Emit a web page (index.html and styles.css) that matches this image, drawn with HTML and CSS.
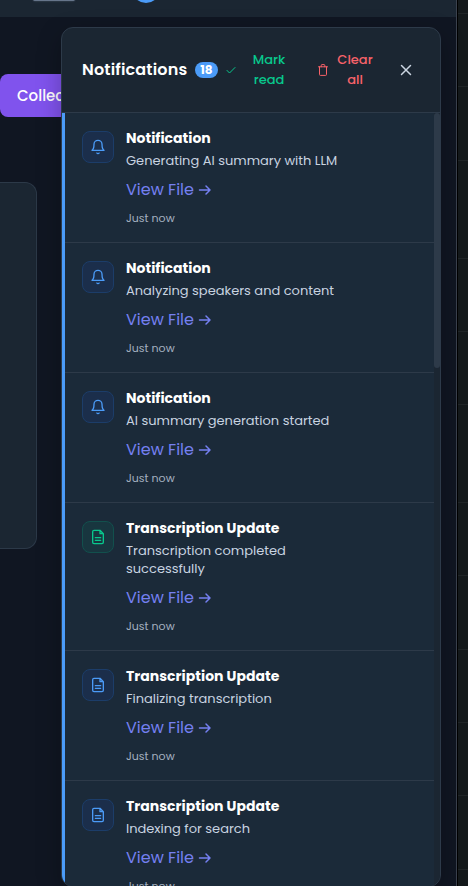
FILE: index.html
```html
<!DOCTYPE html>
<html lang="en">
<head>
<meta charset="utf-8">
<title>Notifications</title>
<link rel="stylesheet" href="styles.css">
</head>
<body>
<svg class="defs" width="0" height="0">
  <symbol id="bell" viewBox="0 0 24 24"><path d="M6 8a6 6 0 0 1 12 0c0 7 3 9 3 9H3s3-2 3-9M10.3 21a1.94 1.94 0 0 0 3.4 0"/></symbol>
  <symbol id="file" viewBox="0 0 24 24"><path d="M15 2H6a2 2 0 0 0-2 2v16a2 2 0 0 0 2 2h12a2 2 0 0 0 2-2V7ZM15 2v5h5M8 13h8M8 17h8"/></symbol>
  <symbol id="arrow" viewBox="0 0 14 12"><path d="M1.5 6H12M8 2l4 4-4 4"/></symbol>
</svg>
<div class="backdrop"><i></i><i></i><i></i><i class="wide"></i><i></i><i></i><i class="wide"></i><i></i><i></i><i></i><i></i><i></i></div>
<div class="app">
  <header class="topbar"><span class="tab"></span><span class="avatar"></span></header>
  <div class="collect">Collections</div>
  <div class="card"></div>
</div>
<aside class="panel">
  <div class="head">
    <h3>Notifications</h3>
    <span class="badge">18</span>
    <button class="mark"><svg viewBox="0 0 10 10"><path d="M1 5.4 3.5 8 9 2.5"/></svg><span>Mark<br>read</span></button>
    <button class="clear"><svg viewBox="0 0 10 12"><path d="M.5 2.8h9M1.5 2.8v7.7q0 .9.9.9h5.2q.9 0 .9-.9V2.8M3.2 2.8V1.4q0-.8.8-.8h2q.8 0 .8.8v1.4"/></svg><span>Clear<br>all</span></button>
    <button class="close"><svg viewBox="0 0 12 12"><path d="m1.5 1.5 9 9m0-9-9 9"/></svg></button>
  </div>
  <div class="body">
    <div class="list">
      <article class="item"><div class="icon"><svg><use href="#bell"/></svg></div><div class="text"><h4>Notification</h4><p>Generating AI summary with LLM</p><a>View File <svg><use href="#arrow"/></svg></a><time>Just now</time></div></article>
      <article class="item"><div class="icon"><svg><use href="#bell"/></svg></div><div class="text"><h4>Notification</h4><p>Analyzing speakers and content</p><a>View File <svg><use href="#arrow"/></svg></a><time>Just now</time></div></article>
      <article class="item"><div class="icon"><svg><use href="#bell"/></svg></div><div class="text"><h4>Notification</h4><p>AI summary generation started</p><a>View File <svg><use href="#arrow"/></svg></a><time>Just now</time></div></article>
      <article class="item"><div class="icon green"><svg><use href="#file"/></svg></div><div class="text"><h4>Transcription Update</h4><p>Transcription completed<br>successfully</p><a>View File <svg><use href="#arrow"/></svg></a><time>Just now</time></div></article>
      <article class="item"><div class="icon"><svg><use href="#file"/></svg></div><div class="text"><h4>Transcription Update</h4><p>Finalizing transcription</p><a>View File <svg><use href="#arrow"/></svg></a><time>Just now</time></div></article>
      <article class="item"><div class="icon"><svg><use href="#file"/></svg></div><div class="text"><h4>Transcription Update</h4><p>Indexing for search</p><a>View File <svg><use href="#arrow"/></svg></a><time>Just now</time></div></article>
    </div>
    <div class="track"><div class="thumb"></div></div>
  </div>
</aside>
</body>
</html>
```
FILE: styles.css
```css
* { box-sizing: border-box; }
html, body { height: 886px; overflow: hidden; }
body {
  margin: 0;
  background: #14191b;
  font-family: Poppins, Inter, sans-serif;
  color: #fff;
}
h3, h4, p { margin: 0; }
svg { fill: none; stroke: currentColor; stroke-width: 2; stroke-linecap: round; stroke-linejoin: round; }
.defs { position: absolute; }
.backdrop { position: absolute; inset: 0; padding-top: 13px; }
.backdrop i { display: block; height: 1px; margin-bottom: 72.3px; background: #202527; }
.backdrop .wide { margin-top: 97px; }
.app {
  position: relative;
  width: 458px; height: 886px;
  background: #101622;
  border-right: 1px solid #000;
  box-shadow: inset -1px 0 #3b424e;
}
.topbar { height: 17px; width: 456px; background: #1b2632; display: flex; overflow: hidden; }
.tab { width: 42px; height: 2px; margin-left: 33px; margin-top: -1px; background: #66758a; border-radius: 0 0 4px 4px; box-shadow: 0 0 2px #536174; }
.avatar { width: 28px; height: 28px; margin: -25px 0 0 57px; border-radius: 50%; background: #4b9bf7; }
.collect {
  width: 122px; height: 43px; margin-top: 57px; padding-left: 17px;
  border-radius: 8px; background: #8053ed;
  font-size: 15px; font-weight: 500; line-height: 43px;
}
.card { width: 37px; height: 367px; margin-top: 65px; border: 1px solid #2c3948; border-left: 0; border-radius: 0 12px 12px 0; background: #1b2632; }
.panel {
  position: absolute; left: 61px; top: 27px; width: 380px; height: 860px;
  display: flex; flex-direction: column;
  border: 1px solid #2d3a49; border-radius: 12px; overflow: hidden;
  background: #1b2632;
  box-shadow: 0 8px 24px #0004;
}
.head { flex: 0 0 85px; display: flex; align-items: center; padding-left: 20px; border-bottom: 1px solid #2d3a49; }
h3 { flex: 0 0 113px; font-size: 16px; font-weight: 600; line-height: 24px; letter-spacing: .16px; white-space: nowrap; }
.badge { flex: 0 0 23px; height: 16px; border-radius: 8px; background: #4b9bf7; text-align: center; font-size: 12px; font-weight: 700; line-height: 16px; }
button { display: flex; flex: none; align-items: center; padding: 0; border: 0; background: none; font: 500 13px/20px Poppins, Inter, sans-serif; text-align: center; }
button span { width: 44px; }
.mark { margin-left: 8px; color: #08c88d; }
.mark svg { width: 10px; height: 10px; margin-right: 11px; stroke-width: 1; }
.clear { margin-left: 27px; color: #f86269; }
.clear svg { width: 10px; height: 12px; margin-right: 5px; stroke-width: 1; }
.close { margin-left: 23px; color: #cbd5e1; }
.close svg { width: 12px; height: 12px; stroke-width: 1.5; }
.body { flex: 1; min-height: 0; display: flex; }
.list { flex: 1; overflow: hidden; }
.item { display: flex; gap: 12px; padding: 16px 17px 15px; border-left: 3px solid #4b9bf7; background: #1b2a39; box-shadow: inset 0 -1px #2d3a49; }
.icon { display: grid; place-items: center; width: 32px; height: 32px; margin-top: 2px; border: 1px solid #1c3d69; border-radius: 8px; background: #1b2e4b; color: #4b9bf7; }
.icon svg { width: 16px; height: 16px; }
.icon.green { color: #08c88d; background: #18363f; border-color: #12504d; }
.text { display: flex; flex-direction: column; align-items: flex-start; white-space: nowrap; }
h4 { font-size: 14px; font-weight: 700; line-height: 18px; letter-spacing: .02px; }
p { margin-top: 5px; font-size: 13px; line-height: 18px; color: #c8d3e0; }
a { display: flex; align-items: center; gap: 4px; margin-top: 8px; font-size: 16px; line-height: 24px; color: #7580f1; }
a svg { width: 14px; height: 12px; stroke-width: 1.5; }
time { margin-top: 7px; margin-bottom: 1px; font-size: 11px; line-height: 18px; color: #a4b0c0; }
.track { width: 6px; background: #1b2632; }
.thumb { height: 255px; border-radius: 3px; background: #2d3a49; }
```
